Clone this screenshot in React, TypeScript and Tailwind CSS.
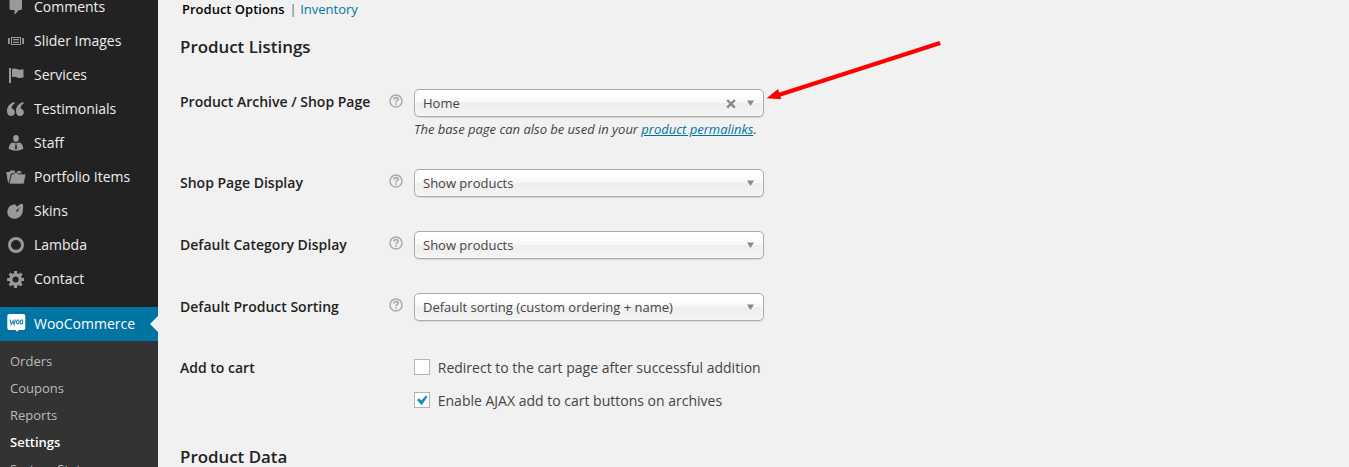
import type { ReactNode } from 'react';

type MenuEntry = { label: string; icon: ReactNode };

const menu: MenuEntry[] = [
  {
    label: 'Comments',
    icon: <path d="M5 2h9.500q1.500 0 1.500 1.500v8q0 1.500-1.500 1.500h-1.500l-4.500 4.700V13H5q-1.500 0-1.500-1.500v-8Q3.500 2 5 2z" />,
  },
  {
    label: 'Slider Images',
    icon: (
      <>
        <path d="M2 7h1.800v6H2zM16.200 7H18v6h-1.800z" />
        <path fillRule="evenodd" d="M5 6h10v8H5zM6 7v6h8V7z" />
        <path d="M7 8h6v1.200H7zM7 10.800h6V12H7z" />
      </>
    ),
  },
  {
    label: 'Services',
    icon: <path d="M3 2.900h2v15H3zM6 4q2.500-1.200 5 0t6.500.2v8.300q-4 1-6.500-.1T6 12z" />,
  },
  {
    label: 'Testimonials',
    icon: (
      <>
        <path d="M8.400 3C3.800 4.100 1 7.700 1 11.900c0 3 1.500 5 4.100 5 2.200 0 3.700-1.500 3.700-3.500S7.500 9.900 5.700 9.800c-.4-2 .9-4.200 3.100-5.500z" />
        <path d="M17.400 3c-4.600 1.100-7.400 4.700-7.400 8.900 0 3 1.500 5 4.100 5 2.200 0 3.700-1.500 3.700-3.500s-1.300-3.500-3.100-3.600c-.4-2 .9-4.200 3.100-5.500z" />
      </>
    ),
  },
  {
    label: 'Staff',
    icon: (
      <>
        <path d="M10 2.100c2 0 3 1.500 2.900 3.400C12.800 7.400 11.600 9 10 9S7.200 7.400 7.100 5.500C7 3.600 8 2.100 10 2.100z" />
        <path fillRule="evenodd" d="M6.300 9.500q2 .1 3.700 1.100 1.700-1 3.700-1.100 3.600 1.700 3.600 6.300-3.500 2-7.300 2-4 0-7.300-2 0-4.600 3.600-6.300zM9.500 11.300l-.5 4 1 1.500 1-1.500-.5-4z" />
      </>
    ),
  },
  {
    label: 'Portfolio Items',
    icon: (
      <>
        <path d="M.2 5h3.300l1-1.500h4L9 5h2l.5-1h3l1 1.500v1H5L3 15.500H2z" />
        <path d="M5.500 7h2l1-1.300h3L12.500 7H20l-2 10H3z" stroke="#222" strokeWidth=".7" />
      </>
    ),
  },
  {
    label: 'Skins',
    icon: (
      <>
        <path d="M8 3.600c1.400-.1 2 .4 2.200 1.200.3 1 1.200.6 2.300-.3 1.500-1.300 3.500-2.200 4.200-1.200.8 1.500.4 3.800.1 5.700.2 5-3.800 9-8.600 8.800-3.900-.2-6.900-3-6.800-7C1.500 7 4.300 3.800 8 3.600z" />
        <path d="M9.700 10.500q2 .4 3.600-1.800L14.500 7l-1.300-.6-1.700 1.800q-.8.900-1.800 2.300z" fill="#222" />
        <path d="M13.300 6.600l1.200.6L13 9.300l-1.200-.8z" />
      </>
    ),
  },
  {
    label: 'Lambda',
    icon: <circle cx="10" cy="10" r="6.500" fill="none" stroke="currentColor" strokeWidth="3" />,
  },
  {
    label: 'Contact',
    icon: (
      <>
        <circle cx="9.600" cy="10.500" r="4.700" fill="none" stroke="currentColor" strokeWidth="3.400" />
        <path
          d="M9.600 2v3M9.600 16v3M1.100 10.500h3M15.100 10.500h3M3.600 4.500l2.100 2.100M13.500 14.400l2.100 2.100M3.600 16.500l2.100-2.100M13.500 6.600l2.100-2.100"
          fill="none"
          stroke="currentColor"
          strokeWidth="3"
        />
      </>
    ),
  },
];

const submenu = ['Orders', 'Coupons', 'Reports', 'Settings', 'System Status'];

function Sidebar() {
  return (
    <nav className="h-[467px] w-[158px] shrink-0 overflow-hidden bg-[#222]">
      <ul className="-mt-[10px] mb-[11px]">
        {menu.map((item) => (
          <li key={item.label} className="flex h-[34px] items-center gap-2 pl-[6px] text-[14px] text-[#eee]">
            <svg viewBox="0 0 20 20" className="size-5 shrink-0 text-[#999]" fill="currentColor">
              {item.icon}
            </svg>
            <span className="pb-[2px]">{item.label}</span>
          </li>
        ))}
      </ul>
      <div className="flex h-[34px] items-center bg-[#0074a2] pl-[6px] text-[14px] text-white">
        <svg viewBox="0 0 20 20" className="size-5 shrink-0">
          <path d="M3.300 0h14q2 0 2 2v12q0 2-2 2h-4.800L11.500 17.700 9.500 16H3.300q-2 0-2-2V2q0-2 2-2z" fill="#fff" />
          <g fill="none" stroke="#2a8cb3" strokeWidth="1.200">
            <path d="M4 5.500l1.200 5 1.900-3.700 1 3.700 1.400-5" />
            <ellipse cx="11.800" cy="7.900" rx="1.300" ry="2" />
            <ellipse cx="15.500" cy="7.900" rx="1.300" ry="2" />
          </g>
        </svg>
        <span className="ml-2 grow pb-[2px]">WooCommerce</span>
        <svg viewBox="0 0 8 16" className="h-4 w-2" fill="#f1f1f1">
          <path d="M8 0v16L0 8z" />
        </svg>
      </div>
      <ul className="h-40 bg-[#333] pt-[7px] pl-[10px] text-[13px] leading-[27px] text-[#bbb]">
        {submenu.map((label) => (
          <li key={label} className={label === 'Settings' ? 'font-semibold text-white' : ''}>
            {label}
          </li>
        ))}
      </ul>
    </nav>
  );
}

function HelpIcon() {
  return (
    <svg viewBox="0 0 14 14" className="mt-[5px] size-[14px]" fill="none" stroke="#aaa">
      <circle cx="7" cy="7" r="6" strokeWidth="1.500" />
      <path d="M4.900 5.500Q5 3.700 7 3.700t2.100 1.600Q9.100 6.300 8 6.800q-1 .5-1 1.500" strokeWidth="1.700" />
      <path d="M7 9.200v1.600" strokeWidth="1.800" />
    </svg>
  );
}

function Select({ value, clearable = false }: { value: string; clearable?: boolean }) {
  return (
    <div className="flex h-7 w-[350px] items-center rounded-[5px] border border-[#aaa] bg-[linear-gradient(#fff_20%,#f6f6f6_50%,#eee_52%,#f4f4f4_100%)] pr-[9px] pl-2 text-[13px] text-[#444] shadow-[inset_0_0_3px_#fff,0_1px_1px_rgba(0,0,0,0.1)]">
      <span className="grow pt-[2px]">{value}</span>
      {clearable && (
        <svg viewBox="0 0 10 10" className="mt-px mr-[11.500px] size-[10px]" stroke="#888" strokeWidth="2.400">
          <path d="M1.200 1l7.600 7.600M8.800 1L1.200 8.600" />
        </svg>
      )}
      <svg viewBox="0 0 7 6" className="h-[6px] w-[7px]" fill="#888">
        <path d="M0 .5h7L3.500 6z" />
      </svg>
    </div>
  );
}

type RowProps = { label: string; labelClass?: string; help?: boolean; className: string; children: ReactNode };

function Row({ label, labelClass = 'pt-1', help = true, className, children }: RowProps) {
  return (
    <div className={`grid grid-cols-[209px_25px_1fr] ${className}`}>
      <div className={`text-[14px] leading-5 font-semibold text-[#222] ${labelClass}`}>{label}</div>
      <div>{help && <HelpIcon />}</div>
      <div>{children}</div>
    </div>
  );
}

function CheckOption({ label, checked = false }: { label: string; checked?: boolean }) {
  return (
    <label className="flex h-[33px] items-start gap-[7.750px]">
      <span className="size-4 border border-[#b4b4b4] bg-white">
        {checked && (
          <svg viewBox="0 0 14 14" className="size-[14px]" fill="#1e8cbe">
            <path d="M2 7l2.200-1.700 2.100 2.300L10.800 2.400l1.700 1.300-5.500 8h-1z" />
          </svg>
        )}
      </span>
      <span className="-mt-px text-[14px] leading-[19px] text-[#444]">{label}</span>
    </label>
  );
}

export default function App() {
  return (
    <div className="flex h-[467px] w-[1349px] overflow-hidden bg-[#f1f1f1] font-['Open_Sans',sans-serif]">
      <Sidebar />
      <main className="relative grow pl-[22px]">
        <div className="flex h-[18px] items-center pl-[2px] text-[13px] leading-[18px]">
          <span className="font-semibold text-black">Product Options</span>
          <span className="mr-[3.500px] ml-[5px] text-[#666]">|</span>
          <a className="text-[#0074a2]">Inventory</a>
        </div>
        <h3 className="mt-[19px] h-5 text-[16.900px] leading-5 font-semibold text-[#222]">Product Listings</h3>
        <Row label="Product Archive / Shop Page" labelClass="pt-[3px]" className="mt-8 h-20">
          <Select value="Home" clearable />
          <p className="mt-[3px] text-[13px] leading-[18px] tracking-[-0.015px] text-[#444] italic">
            The base page can also be used in your <a className="text-[#0074a2] underline">product permalinks</a>.
          </p>
        </Row>
        <Row label="Shop Page Display" className="h-[62px]">
          <Select value="Show products" />
        </Row>
        <Row label="Default Category Display" className="h-[62px]">
          <Select value="Show products" />
        </Row>
        <Row label="Default Product Sorting" className="h-[62px]">
          <Select value="Default sorting (custom ordering + name)" />
        </Row>
        <Row label="Add to cart" labelClass="pt-[3px]" help={false} className="h-[92px]">
          <div className="mt-1">
            <CheckOption label="Redirect to the cart page after successful addition" />
            <CheckOption label="Enable AJAX add to cart buttons on archives" checked />
          </div>
        </Row>
        <h3 className="h-5 text-[16.900px] leading-5 font-semibold text-[#222]">Product Data</h3>
        <svg viewBox="0 0 180 66" className="absolute top-[38px] left-[606px] h-[66px] w-[180px]" fill="#f00">
          <path d="M175.500 3l1.300 3.900L16 58.800l-1.300-4z" />
          <path d="M2.500 60.200L14 51l3.200 10.300z" />
        </svg>
      </main>
    </div>
  );
}
